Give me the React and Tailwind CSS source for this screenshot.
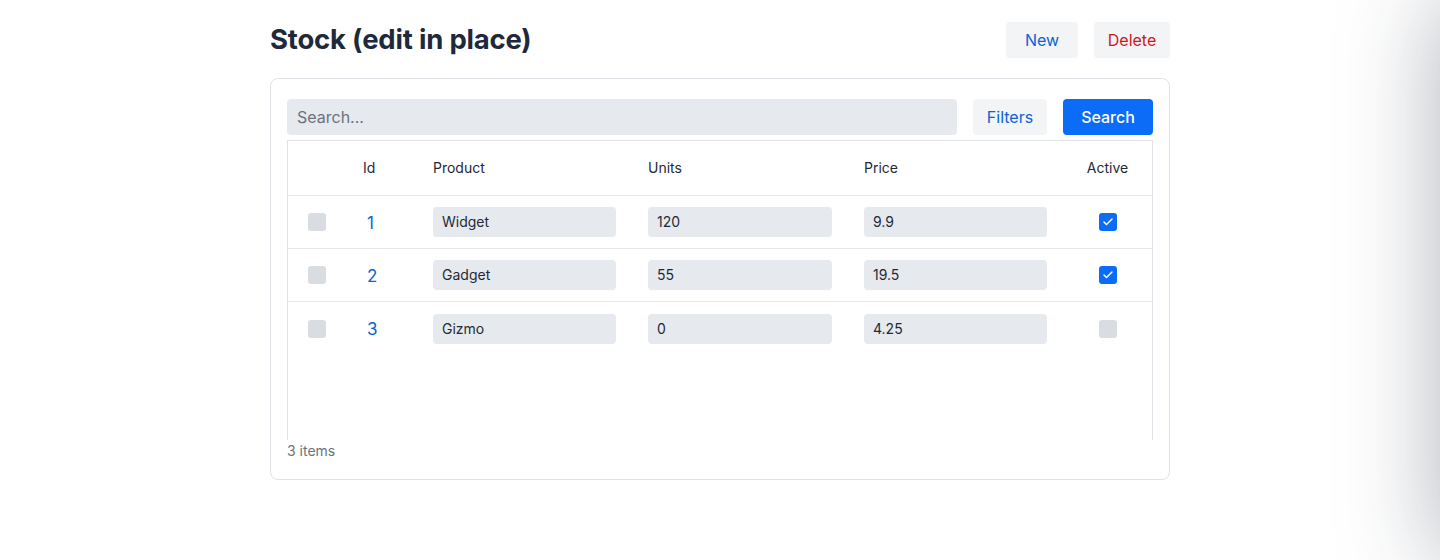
import { Check } from "lucide-react";

const rows = [
  { id: 1, product: "Widget", units: "120", price: "9.9", active: true },
  { id: 2, product: "Gadget", units: "55", price: "19.5", active: true },
  { id: 3, product: "Gizmo", units: "0", price: "4.25", active: false },
];

const cols = "grid grid-cols-[58px_71px_215px_216px_215px_1fr] items-center";

const Box = ({ checked }) =>
  checked ? (
    <span className="flex h-[18px] w-[18px] items-center justify-center rounded-[3px] bg-[#0b6cf7]">
      <Check size={12} strokeWidth={3} className="text-white" />
    </span>
  ) : (
    <span className="block h-[18px] w-[18px] rounded-[3px] bg-[#d9dce1]" />
  );

const Field = ({ value }) => (
  <div className="flex h-[30px] items-center rounded-[4px] bg-[#e6e9ee] pl-[9px] text-sm text-[#1f2937]">
    {value}
  </div>
);

const Row = ({ row, last }) => (
  <div className={`${cols} h-[53px] ${last ? "" : "border-b border-[#e5e7eb]"}`}>
    <div className="flex justify-center">
      <Box checked={false} />
    </div>
    <div className="pl-[21px] pt-[3px] text-[17px] text-[#0b62d6]">{row.id}</div>
    <div className="px-4">
      <Field value={row.product} />
    </div>
    <div className="px-4">
      <Field value={row.units} />
    </div>
    <div className="px-4">
      <Field value={row.price} />
    </div>
    <div className="flex justify-center">
      <Box checked={row.active} />
    </div>
  </div>
);

const App = () => (
  <div className="min-h-[560px] bg-white font-['Inter',sans-serif]">
    <div className="mx-auto w-[900px] pt-[22px]">
      <header className="flex h-9 items-center justify-between">
        <h1 className="text-[27.5px] font-bold tracking-[-0.2px] text-[#1e293b]">
          Stock (edit in place)
        </h1>
        <div className="flex gap-4">
          <button className="h-9 w-[72px] rounded-[4px] bg-[#f2f4f6] text-base text-[#0b62d6]">
            New
          </button>
          <button className="h-9 w-[76px] rounded-[4px] bg-[#f2f4f6] text-base text-[#d0161b]">
            Delete
          </button>
        </div>
      </header>

      <section className="mt-5 rounded-lg border border-[#dfe2e6] px-4 pb-[18px] pt-5">
        <div className="flex gap-4">
          <div className="flex h-9 flex-1 items-center rounded-[4px] bg-[#e6e9ee] pl-[10px] text-base text-[#6b7280]">
            Search...
          </div>
          <button className="h-9 w-[74px] rounded-[4px] bg-[#f2f4f6] text-base text-[#0b62d6]">
            Filters
          </button>
          <button className="h-9 w-[90px] rounded-[4px] bg-[#0b6cf7] text-base font-medium text-white">
            Search
          </button>
        </div>

        <div className="mt-[5px] h-[300px] border-x border-t border-[#dfe2e6]">
          <div className={`${cols} h-[55px] border-b border-[#e5e7eb] text-sm text-[#1f2937]`}>
            <div />
            <div className="pl-[17px]">Id</div>
            <div className="px-4">Product</div>
            <div className="px-4">Units</div>
            <div className="px-4">Price</div>
            <div className="text-center">Active</div>
          </div>
          {rows.map((row, i) => (
            <Row key={row.id} row={row} last={i === rows.length - 1} />
          ))}
        </div>

        <div className="pt-[1px] text-sm text-[#6b7280]">3 items</div>
      </section>
    </div>

    <div className="pointer-events-none fixed left-full top-0 h-full w-[300px] shadow-[0_0_90px_rgba(30,41,59,0.35)]" />
  </div>
);

export default App;
